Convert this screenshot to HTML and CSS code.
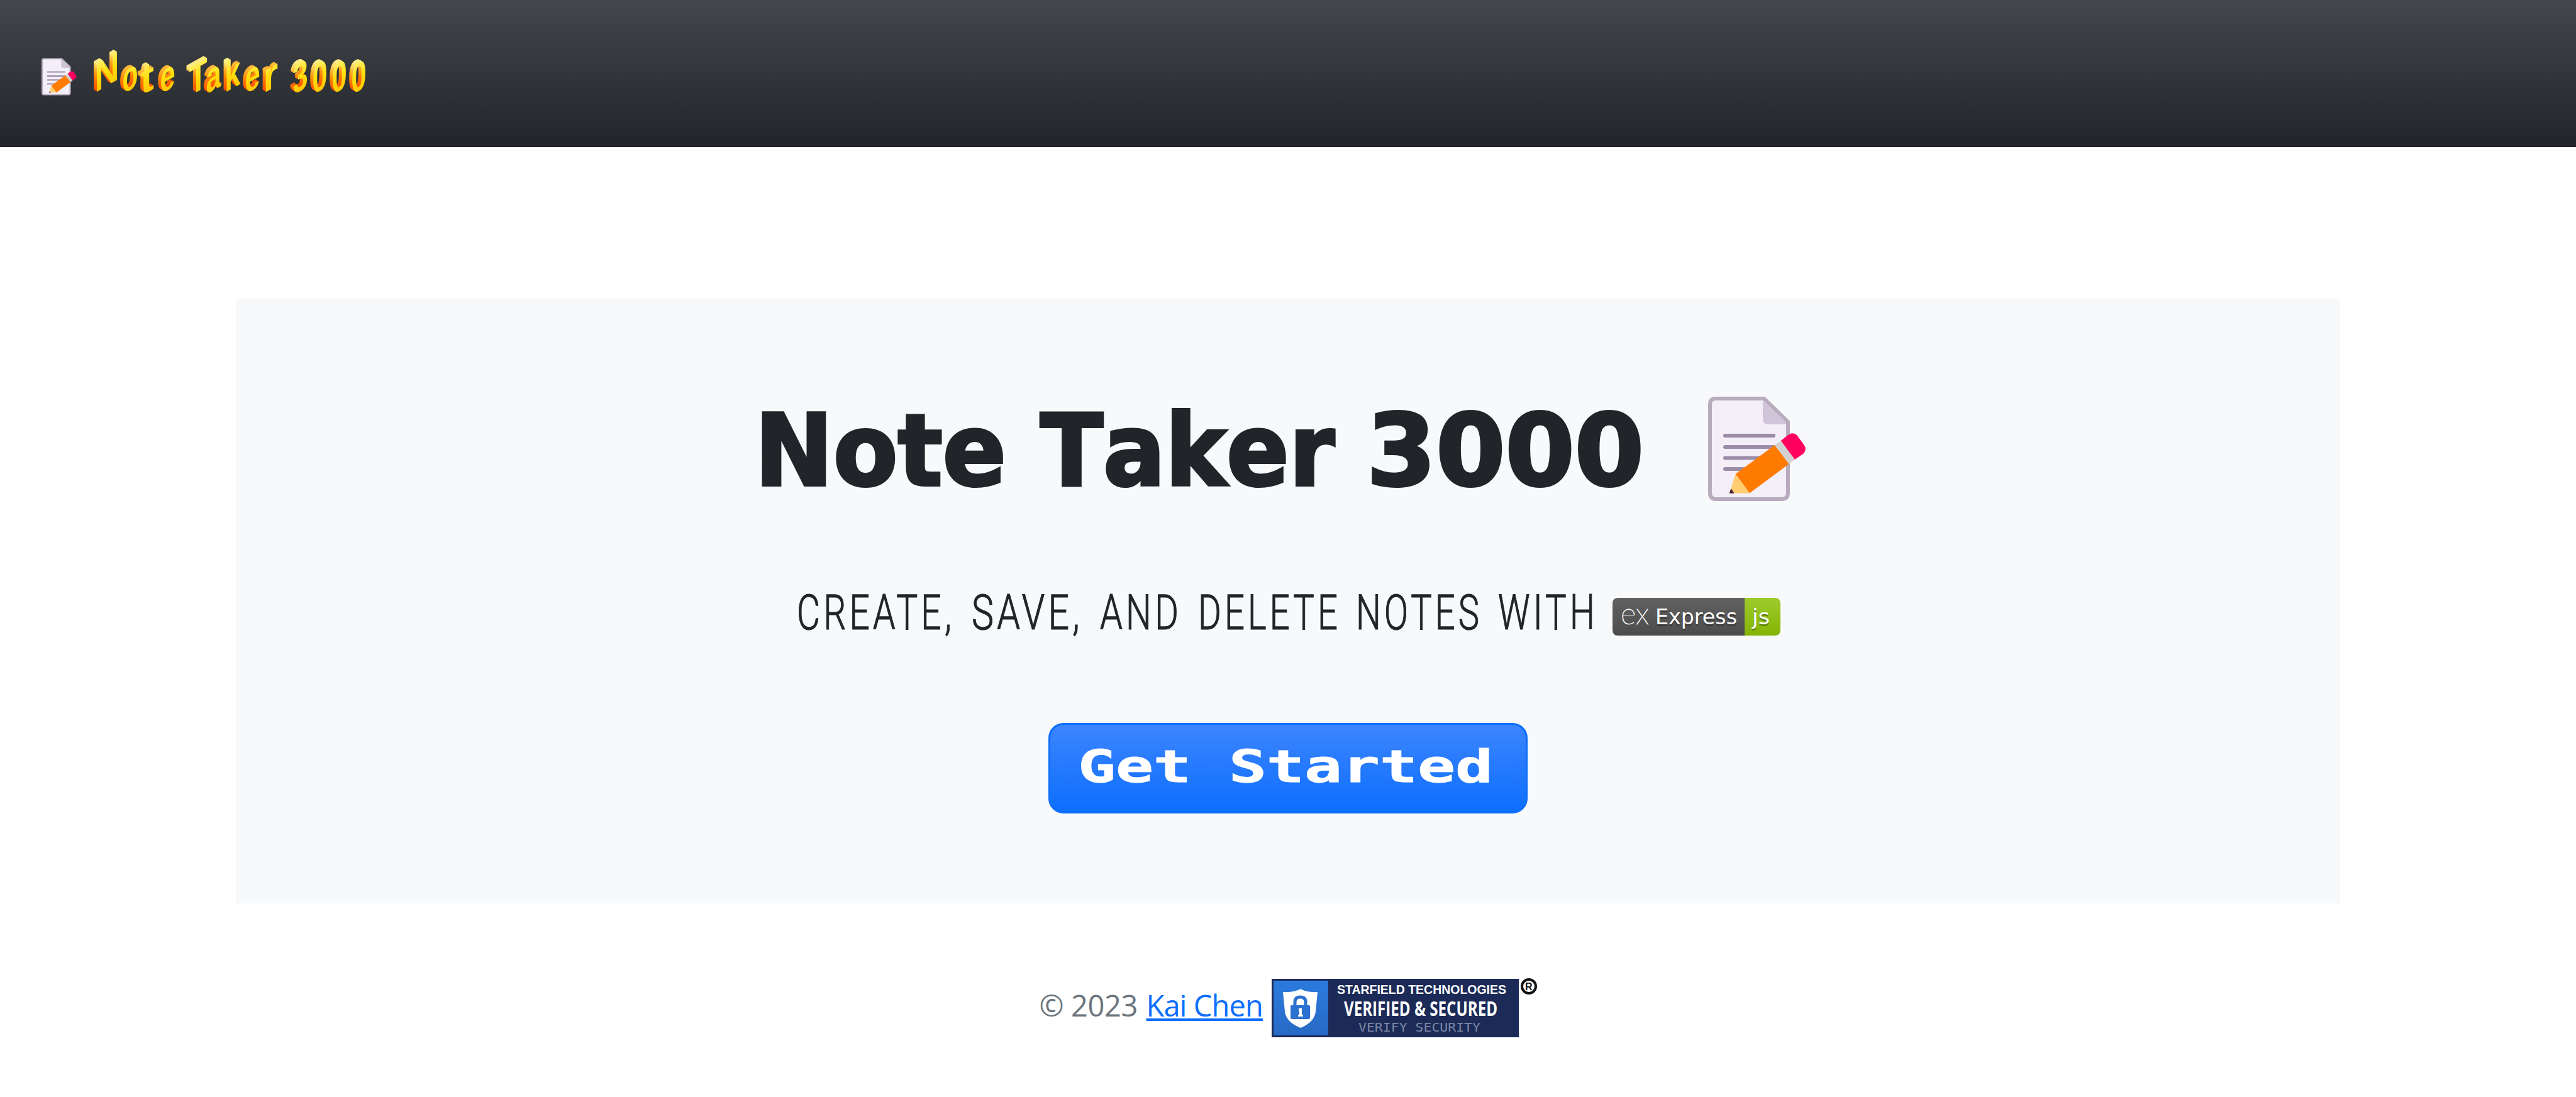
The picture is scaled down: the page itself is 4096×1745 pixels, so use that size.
FILE: index.html
```html
<!DOCTYPE html>
<html lang="en">
<head>
<meta charset="utf-8">
<title>Note Taker 3000</title>
<link rel="stylesheet" href="styles.css">
</head>
<body>
<svg class="defs" width="0" height="0" aria-hidden="true">
  <defs>
    <symbol id="memo" viewBox="0 0 156 166">
      <path d="M12 3H89L127 40V153Q127 163 117 163H13Q3 163 3 153V12Q3 3 12 3Z" fill="#f3eef8" stroke="#b7abbd" stroke-width="6"/>
      <path d="M87 6V35Q87 44 97 44H124V40Z" fill="#d0c5d8"/>
      <path d="M27 62H104M27 80H104M27 97.500H104M27 115H90" stroke="#9b8da8" stroke-width="6" stroke-linecap="round"/>
      <path d="M106 77L128.600 107L66 153.500L43.500 123Z" fill="#ff7b00"/>
      <path d="M43.500 123L66 153.500H41L36.500 146Z" fill="#ffcc6f"/>
      <path d="M36.500 146L41.600 153.700H33.500Z" fill="#4b2433"/>
      <path d="M106 77L115.700 70L137.800 100L128.600 107Z" fill="#d2d2d2"/>
      <path d="M115.700 70L128 60.500Q135 56 141 61L152 76Q158 84 151 91L137.800 100Z" fill="#ff005f"/>
    </symbol>
    <linearGradient id="face" gradientUnits="userSpaceOnUse" x1="0" y1="-46" x2="0" y2="0">
      <stop offset="0" stop-color="#ffee62"/><stop offset=".45" stop-color="#ffe010"/><stop offset="1" stop-color="#ffc800"/>
    </linearGradient>
    <linearGradient id="side" gradientUnits="userSpaceOnUse" x1="0" y1="-46" x2="0" y2="0">
      <stop offset="0" stop-color="#fff08a"/><stop offset=".3" stop-color="#ffac28"/><stop offset=".6" stop-color="#ff7a00"/><stop offset="1" stop-color="#ff4a00"/>
    </linearGradient>
    <linearGradient id="dark" x1="0" y1="0" x2="0" y2="1"><stop stop-color="#616161"/><stop offset="1" stop-color="#4c4c4c"/></linearGradient>
    <linearGradient id="green" x1="0" y1="0" x2="0" y2="1"><stop stop-color="#9dcb2c"/><stop offset="1" stop-color="#85b405"/></linearGradient>
    <linearGradient id="blue" x1="0" y1="0" x2="0" y2="1"><stop stop-color="#2b7ade"/><stop offset="1" stop-color="#286ac4"/></linearGradient>
  </defs>
</svg>

<header class="navbar">
  <svg class="navbar-icon" viewBox="0 0 156 166"><use href="#memo"/></svg>
  <svg class="brand" viewBox="144 74 450 80">
    <g class="brand-side">
      <use href="#word" x="-5" y="-3"/><use href="#word" x="-4" y="-2.400"/><use href="#word" x="-3" y="-1.800"/><use href="#word" x="-2" y="-1.200"/><use href="#word" x="-1" y="-.6"/>
    </g>
    <g class="brand-face">
      <g id="word">
        <text transform="matrix(.82 -.48 0 1 150.500 148)">N</text>
        <text transform="matrix(.62 -.34 0 1 194.500 150)">o</text>
        <text transform="matrix(1 -.5 0 1 223 152)">t</text>
        <text transform="matrix(.66 -.36 0 1 254.500 150)">e</text>
        <text transform="matrix(.71 -.4 0 1 301 153)">T</text>
        <text transform="matrix(.66 -.36 0 1 327.500 150)">a</text>
        <text transform="matrix(.68 -.38 0 1 357.500 147.500)">k</text>
        <text transform="matrix(.66 -.36 0 1 389.500 150)">e</text>
        <text transform="matrix(.92 -.48 0 1 418.500 148.500)">r</text>
        <text transform="matrix(.66 -.36 0 1 465.500 151)">3</text>
        <text transform="matrix(.66 -.36 0 1 496.500 151)">0</text>
        <text transform="matrix(.66 -.36 0 1 527.500 151)">0</text>
        <text transform="matrix(.66 -.36 0 1 558.500 151)">0</text>
      </g>
    </g>
  </svg>
</header>

<main class="hero">
  <h1 class="row">
    <svg width="1700" height="190" viewBox="1199 620 1700 190">
      <g class="title">
        <text x="1201" y="771.700" textLength="400" lengthAdjust="spacingAndGlyphs">Note</text>
        <text x="1655" y="771.700" textLength="468" lengthAdjust="spacingAndGlyphs">Taker</text>
        <text x="2174" y="771.700" textLength="441" lengthAdjust="spacingAndGlyphs">3000</text>
      </g>
      <use href="#memo" x="2717" y="631" width="156" height="166"/>
    </svg>
  </h1>
  <p class="row">
    <svg width="1600" height="100" viewBox="1249 930 1600 100">
      <g class="tagline">
        <text x="1268" y="1001" textLength="251" lengthAdjust="spacingAndGlyphs">CREATE,</text>
        <text x="1546" y="1001" textLength="177" lengthAdjust="spacingAndGlyphs">SAVE,</text>
        <text x="1750" y="1001" textLength="130" lengthAdjust="spacingAndGlyphs">AND</text>
        <text x="1906" y="1001" textLength="227" lengthAdjust="spacingAndGlyphs">DELETE</text>
        <text x="2157" y="1001" textLength="201" lengthAdjust="spacingAndGlyphs">NOTES</text>
        <text x="2383" y="1001" textLength="159" lengthAdjust="spacingAndGlyphs">WITH</text>
      </g>
      <path d="M2574 951H2775V1011H2574Q2565 1011 2565 1002V960Q2565 951 2574 951Z" fill="url(#dark)"/>
      <path d="M2775 951H2823Q2832 951 2832 960V1002Q2832 1011 2823 1011H2775Z" fill="url(#green)"/>
      <text class="badge-logo" x="2578" y="992.700" textLength="45" lengthAdjust="spacingAndGlyphs">ex</text>
      <g class="badge-shade" transform="translate(0 3)"><use href="#badge-text"/></g>
      <g class="badge-face">
        <g id="badge-text">
          <text x="2633" y="992.700" textLength="130" lengthAdjust="spacingAndGlyphs">Express</text>
          <text x="2787" y="992.700" textLength="28" lengthAdjust="spacingAndGlyphs">js</text>
        </g>
      </g>
    </svg>
  </p>
  <a class="button">
    <svg width="700" height="100" viewBox="1699 1172 700 100">
      <text class="pixel" x="1715" y="1243.500" textLength="660" lengthAdjust="spacingAndGlyphs">Get Started</text>
    </svg>
  </a>
</main>

<footer class="footer">
  <span class="copy">© 2023</span>
  <a class="link">Kai Chen</a>
  <svg class="seal" width="424" height="93" viewBox="2023 1558 424 93">
    <rect x="2023" y="1558" width="393" height="93" fill="#1c2a58"/>
    <rect x="2026" y="1561" width="87" height="87" fill="url(#blue)"/>
    <path d="M2069 1574Q2078 1580 2096 1579L2093 1610Q2091 1627 2069 1636Q2046 1627 2044 1610L2041 1579Q2059 1580 2069 1574Z" fill="#fff"/>
    <rect x="2053" y="1600" width="31" height="22" rx="2" fill="#2b71cf"/>
    <path d="M2060 1601V1595Q2060 1587 2068.500 1587T2077 1595V1601" fill="none" stroke="#2b71cf" stroke-width="5"/>
    <path d="M2066 1605H2071V1615H2073V1618H2065V1615H2067V1610H2066Z" fill="#fff"/>
    <text class="seal-name" x="2127" y="1582" textLength="269" lengthAdjust="spacingAndGlyphs">STARFIELD TECHNOLOGIES</text>
    <text class="seal-main" x="2138" y="1616.500" textLength="244" lengthAdjust="spacingAndGlyphs">VERIFIED &amp; SECURED</text>
    <text class="seal-sub" x="2161" y="1642" textLength="194" lengthAdjust="spacingAndGlyphs">VERIFY SECURITY</text>
    <circle cx="2432" cy="1570" r="11" fill="#fff" stroke="#111" stroke-width="4"/>
    <text class="seal-mark" x="2426" y="1576">R</text>
  </svg>
</footer>
</body>
</html>
```
FILE: styles.css
```css
body {
  margin: 0;
  height: 1745px;
  overflow: hidden;
  display: flex;
  flex-direction: column;
  align-items: center;
  background: #fff;
  color: #212529;
  font-family: "Open Sans", sans-serif;
}
svg { display: block; overflow: visible; }
.defs { position: absolute; }

.navbar {
  width: 100%;
  height: 234px;
  box-sizing: border-box;
  padding: 0 66px;
  display: flex;
  align-items: flex-start;
  background: linear-gradient(#43464a, #212529);
}
.navbar-icon { width: 56px; height: 60px; margin: 92px 22px 0 0; }
.brand { width: 450px; height: 80px; margin-top: 74px; }
.brand text { font: bold 66px "Liberation Sans", sans-serif; }
.brand-side { fill: url(#side); }
.brand-face { fill: url(#face); }

.hero {
  width: 3346px;
  height: 963px;
  margin-top: 240px;
  box-sizing: border-box;
  padding-top: 146px;
  display: flex;
  flex-direction: column;
  align-items: center;
  background: #f8f9fb;
}
.row { margin: 0 0 120px; }
.title text {
  font: bold 159px "DejaVu Sans Condensed", "DejaVu Sans", sans-serif;
  font-stretch: condensed;
  font-kerning: none;
  fill: #212529;
  stroke: #212529;
  stroke-width: 4px;
}
.tagline text {
  font: 300 77px Roboto, sans-serif;
  letter-spacing: 7px;
  fill: #212529;
  stroke: #212529;
  stroke-width: 1.2px;
}
.badge-face text, .badge-shade text { font: 33px "DejaVu Sans", sans-serif; }
.badge-face { fill: #fff; }
.badge-shade { fill: #010101; opacity: .3; }
.badge-logo { font: 100 47px Lato, sans-serif; fill: #fff; stroke: #fff; stroke-width: .8px; }

.button {
  width: 762px;
  height: 144px;
  box-sizing: border-box;
  border: 3px solid #0d6efd;
  border-radius: 24px;
  display: flex;
  align-items: center;
  justify-content: center;
  background: linear-gradient(#3c85fe, #0d6efd);
}
.pixel { font: bold 71px "DejaVu Sans Mono", monospace; fill: #fff; stroke: #fff; stroke-width: 1px; }

.footer {
  margin-top: 120px;
  padding-left: 2px;
  display: flex;
  align-items: flex-start;
  font-size: 47px;
  line-height: 64px;
  color: #6c757d;
}
.copy { width: 170px; padding-top: 10px; letter-spacing: -.4px; white-space: nowrap; }
.link {
  width: 186px;
  padding-top: 10px;
  margin-right: 13px;
  letter-spacing: -.9px;
  white-space: nowrap;
  color: #0d6efd;
  text-decoration: underline;
  text-decoration-thickness: 4px;
  text-underline-offset: 3px;
  text-decoration-skip-ink: none;
}
.seal-name { font: bold 19.500px "Liberation Sans", sans-serif; fill: #fff; }
.seal-main { font: bold 32px "Open Sans", sans-serif; fill: #fff; }
.seal-sub { font: 19px "DejaVu Sans Mono", monospace; fill: #7e87a3; }
.seal-mark { font: bold 16px "Liberation Sans", sans-serif; fill: #111; }
```
